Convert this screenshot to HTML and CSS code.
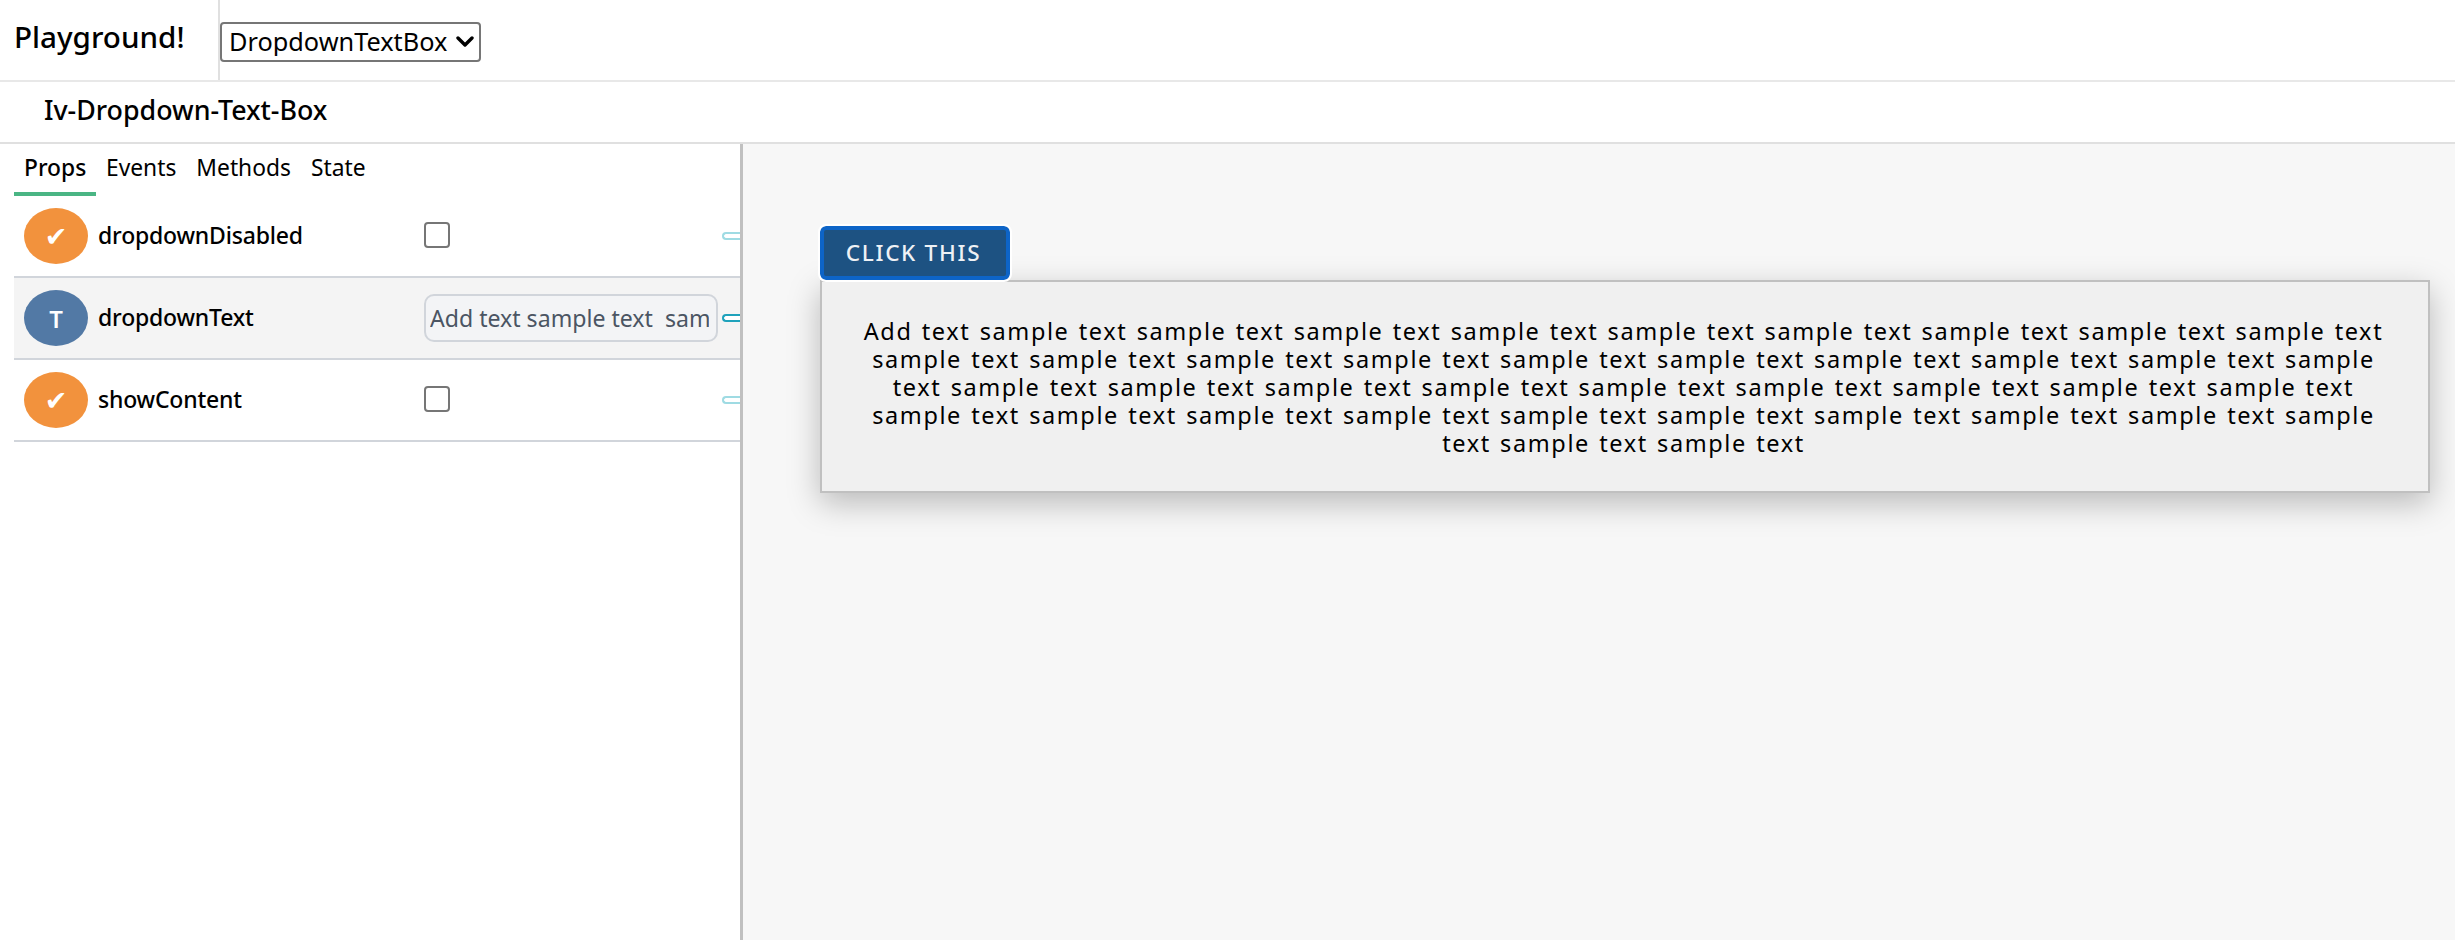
FILE: index.html
```html
<!DOCTYPE html>
<html lang="en">
<head>
<meta charset="utf-8">
<title>Playground</title>
<link rel="stylesheet" href="styles.css">
</head>
<body>
<header class="topbar">
  <div class="brand">Playground!</div>
  <div class="picker">
    <div class="picker-wrap">
      <select class="picker-select"><option>DropdownTextBox</option></select>
      <svg class="picker-arrow" viewBox="0 0 18 11" aria-hidden="true"><path d="M2 2l7 7 7-7" fill="none" stroke="#000" stroke-width="3.4" stroke-linecap="round" stroke-linejoin="round"/></svg>
    </div>
  </div>
</header>
<div class="titlebar">Iv-Dropdown-Text-Box</div>
<main class="workspace">
  <section class="panel">
    <nav class="tabs">
      <span class="tab tab-active">Props</span>
      <span class="tab">Events</span>
      <span class="tab">Methods</span>
      <span class="tab">State</span>
    </nav>
    <div class="rows">
      <div class="row">
        <span class="badge badge-bool">✔</span>
        <span class="prop-name">dropdownDisabled</span>
        <span class="prop-value"><span class="check"></span></span>
        <span class="handle handle-dim"></span>
      </div>
      <div class="row row-active">
        <span class="badge badge-text">T</span>
        <span class="prop-name">dropdownText</span>
        <span class="prop-value"><input class="text-input" value="Add text sample text  sample text sample text"></span>
        <span class="handle"></span>
      </div>
      <div class="row">
        <span class="badge badge-bool">✔</span>
        <span class="prop-name">showContent</span>
        <span class="prop-value"><span class="check"></span></span>
        <span class="handle handle-dim"></span>
      </div>
    </div>
  </section>
  <section class="stage">
    <button class="drop-btn">CLICK THIS</button>
    <div class="drop-content">Add text sample text sample text sample text sample text sample text sample text sample text sample text sample text
      sample text sample text sample text sample text sample text sample text sample text sample text sample text sample text
      sample text sample text sample text sample text sample text sample text sample text sample text sample text sample text
      sample text sample text sample text sample text sample text sample text sample text sample text sample text sample text
      sample text</div>
  </section>
</main>
</body>
</html>
```
FILE: styles.css
```css
* { box-sizing: border-box; }
html, body { height: 100%; }
body {
  margin: 0;
  display: flex;
  flex-direction: column;
  height: 940px;
  overflow: hidden;
  font-family: "Noto Sans", "Open Sans", sans-serif;
  color: #000;
  background: #fff;
}
.topbar {
  display: flex;
  height: 82px;
  flex: none;
  border-bottom: 2px solid #e8e8e8;
}
.brand {
  width: 220px;
  padding: 14px 0 0 14px;
  font-size: 29.6px;
  line-height: 46px;
  font-weight: 500;
  border-right: 2px solid #e0e0e0;
}
.picker { padding-top: 22px; }
.picker-wrap { position: relative; width: 261px; height: 40px; }
.picker-select {
  appearance: none;
  display: block;
  width: 100%;
  height: 100%;
  font: 25.3px "Noto Sans", sans-serif;
  color: #000;
  background: #fff;
  border: 2px solid #767676;
  border-radius: 4px;
  padding: 0 0 4px 7px;
}
.picker-arrow {
  position: absolute;
  right: 7px;
  top: 14px;
  width: 18px;
  height: 11px;
  pointer-events: none;
}
.titlebar {
  flex: none;
  height: 62px;
  padding: 9px 0 0 44px;
  font-size: 26.8px;
  line-height: 38px;
  font-weight: 500;
  border-bottom: 2px solid #e0e0e0;
}
.workspace { flex: 1; display: flex; min-height: 0; }
.panel {
  width: 743px;
  flex: none;
  padding-left: 14px;
  border-right: 3px solid #c0c0c0;
}
.tabs { display: flex; height: 52px; }
.tab {
  font-size: 22.8px;
  line-height: 48px;
  padding: 0 10px;
}
.tab-active {
  width: 82px;
  border-bottom: 4px solid #4ab584;
  font-weight: 500;
}
.rows { display: flex; flex-direction: column; }
.row {
  position: relative;
  display: flex;
  align-items: center;
  height: 82px;
  padding-left: 10px;
  border-bottom: 2px solid #d1d5db;
}
.row-active { background: #f4f4f4; }
.badge {
  flex: none;
  width: 64px;
  height: 56px;
  border-radius: 50%;
  display: flex;
  align-items: center;
  justify-content: center;
  color: #fff;
  font-family: "DejaVu Sans", sans-serif;
  font-size: 27px;
}
.badge-bool { background: #f2923d; }
.badge-text { background: #5279a5; font-family: "Noto Sans", sans-serif; font-size: 24px; font-weight: 600; }
.prop-name {
  width: 336px;
  flex: none;
  padding: 0 0 3px 10px;
  font-size: 23px;
  letter-spacing: -0.2px;
  font-weight: 500;
}
.prop-value { display: flex; align-items: center; }
.check {
  display: block;
  width: 26px;
  height: 26px;
  margin-top: -3px;
  background: #fff;
  border: 2px solid #767676;
  border-radius: 4px;
}
.text-input {
  width: 294px;
  height: 48px;
  padding: 0 7px 0 4px;
  font: 23.1px "Noto Sans", sans-serif;
  color: #4b5563;
  background: #f3f4f6;
  border: 2px solid #d1d5db;
  border-radius: 10px;
  outline: none;
}
.handle {
  position: absolute;
  right: 0;
  top: 36px;
  width: 18px;
  height: 8px;
  border: 2px solid #1fa2bb;
  border-right: 0;
  border-radius: 4px 0 0 4px;
  background: #fff;
}
.handle-dim { border-color: #9fdbe3; }
.stage {
  flex: 1;
  display: flex;
  flex-direction: column;
  align-items: flex-start;
  background: #f7f7f7;
  padding: 82px 25px 0 77px;
}
.drop-btn {
  width: 190px;
  height: 54px;
  padding: 0 3px 2px 0;
  font: 500 22.5px "Noto Sans", sans-serif;
  letter-spacing: 1.7px;
  color: #eef1f5;
  background: #1d5282;
  border: 4px solid #0d64c7;
  border-radius: 6px;
  outline: 2px solid #fff;
  position: relative;
  z-index: 1;
}
.drop-content {
  width: 100%;
  height: 213px;
  padding: 35px 33px 0 30px;
  font-size: 23.5px;
  line-height: 28px;
  letter-spacing: 1.6px;
  word-spacing: 1.6px;
  text-align: center;
  background: #f0f0f0;
  border: 2px solid #c0c0c0;
  box-shadow: 0 10px 30px rgba(0,0,0,.25);
}
```
